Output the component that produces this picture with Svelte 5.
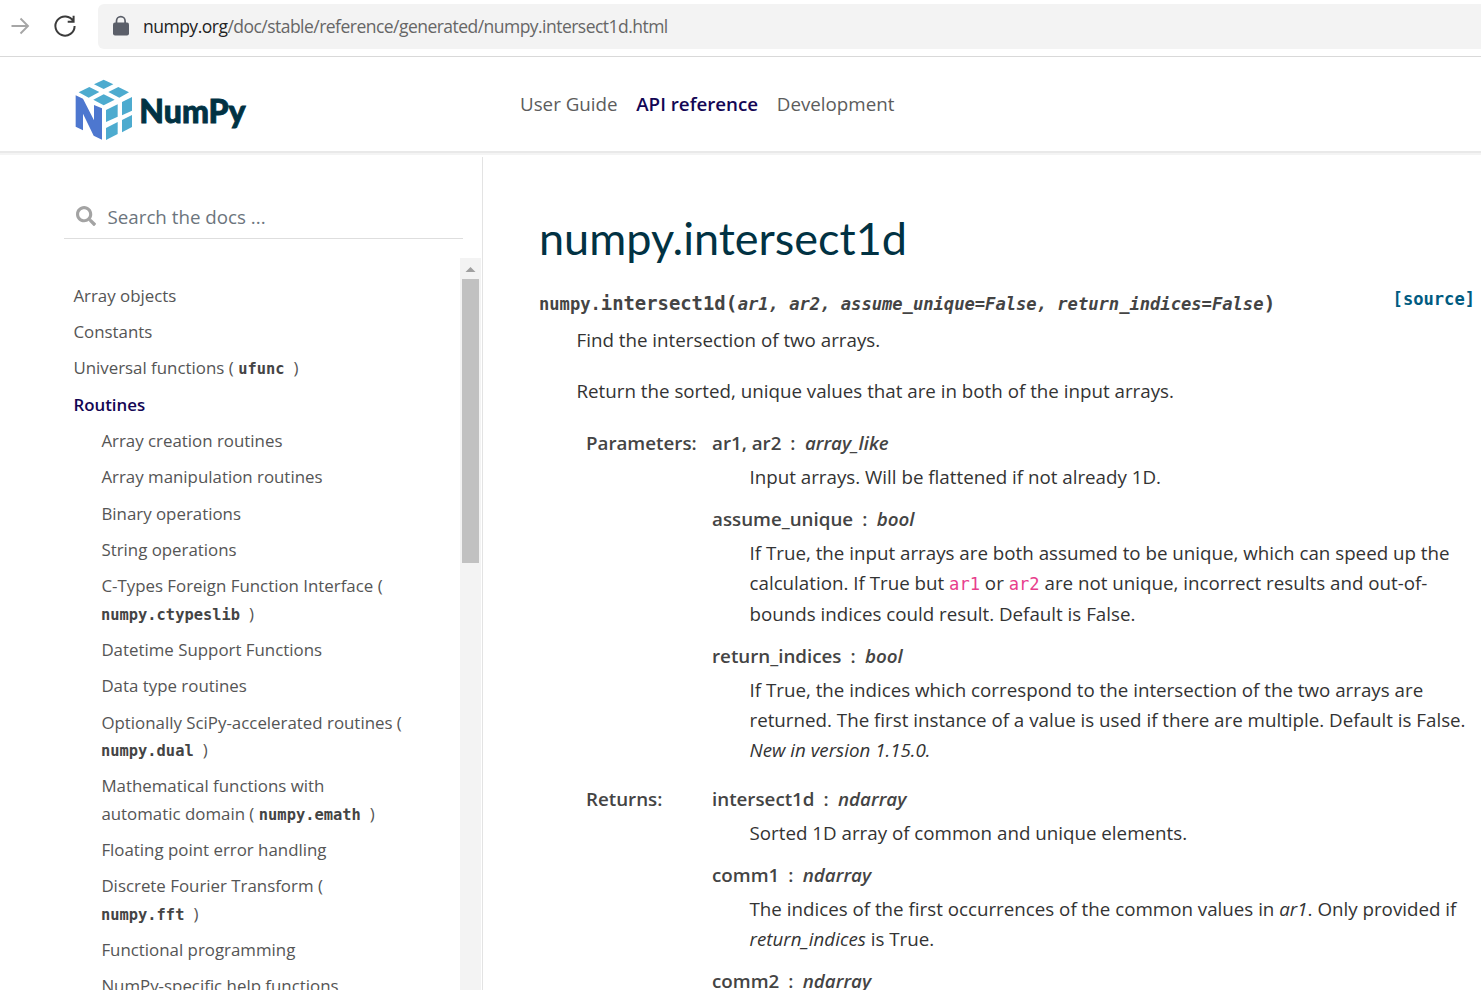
<script>
  const topics = [
    { text: 'Array objects' },
    { text: 'Constants' },
    { text: 'Universal functions (', code: 'ufunc' },
    { text: 'Routines', active: true },
    { text: 'Array creation routines', sub: true },
    { text: 'Array manipulation routines', sub: true },
    { text: 'Binary operations', sub: true },
    { text: 'String operations', sub: true },
    { text: 'C-Types Foreign Function Interface (', code: 'numpy.ctypeslib', wrap: true, sub: true },
    { text: 'Datetime Support Functions', sub: true },
    { text: 'Data type routines', sub: true },
    { text: 'Optionally SciPy-accelerated routines (', code: 'numpy.dual', wrap: true, sub: true },
    { text: 'Mathematical functions with', rest: 'automatic domain (', code: 'numpy.emath', sub: true },
    { text: 'Floating point error handling', sub: true },
    { text: 'Discrete Fourier Transform (', code: 'numpy.fft', wrap: true, sub: true },
    { text: 'Functional programming', sub: true },
    { text: 'NumPy-specific help functions', sub: true }
  ];
</script>

<div class="page">
  <div class="browser">
    <svg class="fwd" width="20" height="20" viewBox="0 0 20 20"><path d="M1.500 10H18M10.500 2.500L18 10L10.500 17.500" fill="none" stroke="#a6a6a6" stroke-width="1.900" /></svg>
    <svg class="reload" width="24" height="24" viewBox="0 0 24 24"><path d="M20.300 7.200A9.600 9.600 0 1 0 21.600 12M20.600 1.800V7.700H14.700" fill="none" stroke="#3b3b3b" stroke-width="2" /></svg>
    <div class="address">
      <svg width="18" height="22" viewBox="0 0 18 22"><path d="M4.500 9V6a4.300 4.300 0 0 1 8.600 0v3" fill="none" stroke="#5b5f69" stroke-width="1.700" /><rect x="1" y="7.500" width="16" height="13" rx="2" fill="#5b5f69" /></svg>
      <span class="url"><b>numpy.org</b>/doc/stable/reference/generated/numpy.intersect1d.html</span>
    </div>
  </div>

  <header>
    <svg class="logo" width="200" height="80" viewBox="0 0 600 240">
      <g fill="#4dabcf">
        <path d="M131 29L160 43L131 57L102 43Z" />
        <path d="M88 51L118 66L86 83L56 67Z" />
        <path d="M175 51L207 67L178 83L145 66Z" />
        <path d="M131 73L164 89L131 106L100 89Z" />
        <path d="M138 120L173 103V140L138 156Z" />
        <path d="M186 96L216 81V122L186 136Z" />
        <path d="M138 174L173 156V192L138 210Z" />
        <path d="M186 150L216 135V171L186 187Z" />
      </g>
      <path d="M47 76L69 86L102 151V105L126 115V209L101 197L69 131V181L47 170Z" fill="#4d77cf" />
      <text x="238" y="160" textLength="319" lengthAdjust="spacingAndGlyphs">NumPy</text>
    </svg>
    <nav>
      <span class="n1">User Guide</span>
      <span class="n2">API reference</span>
      <span class="n3">Development</span>
    </nav>
  </header>

  <div class="body">
    <aside>
      <div class="search">
        <svg width="20" height="20" viewBox="0 0 512 512"><path fill="#a3a3a3" d="M505 442.700L405.300 343c-4.500-4.500-10.600-7-17-7H372c27.600-35.300 44-79.700 44-128C416 93.100 322.900 0 208 0S0 93.100 0 208s93.100 208 208 208c48.300 0 92.700-16.400 128-44v16.300c0 6.400 2.500 12.500 7 17l99.700 99.700c9.400 9.400 24.600 9.400 33.900 0l28.300-28.300c9.400-9.400 9.400-24.600.1-34zM208 336c-70.700 0-128-57.200-128-128 0-70.700 57.200-128 128-128 70.700 0 128 57.200 128 128 0 70.700-57.200 128-128 128z" /></svg>
        <span>Search the docs ...</span>
      </div>
      <div class="scroller">
        <ul>
          {#each topics as t}
            <li class:sub={t.sub} class:active={t.active}>
              {t.text}{#if t.rest}<br />{t.rest}{/if}{#if t.wrap}<br />{/if}{#if t.code}<code class:lead={t.wrap}>{t.code}</code><span>)</span>{/if}
            </li>
          {/each}
        </ul>
        <div class="track">
          <svg width="21" height="21" viewBox="0 0 21 21"><path d="M5.500 14L10.500 9L15.500 14Z" fill="#a0a0a0" /></svg>
          <div class="thumb"></div>
        </div>
      </div>
    </aside>

    <main>
      <h1>numpy.intersect1d</h1>
      <div class="sig">
        <div><span>numpy.</span><span class="big">intersect1d<span class="paren">(</span></span><i>ar1, ar2, assume_unique=False, return_indices=False</i><span class="big paren">)</span></div>
        <a href="#source">[source]</a>
      </div>
      <div class="desc">
        <p>Find the intersection of two arrays.</p>
        <p>Return the sorted, unique values that are in both of the input arrays.</p>
        <div class="fields">
          <div class="label">Parameters:</div>
          <dl>
            <dt>ar1, ar2<span>:</span><i>array_like</i></dt>
            <dd>Input arrays. Will be flattened if not already 1D.</dd>
            <dt>assume_unique<span>:</span><i>bool</i></dt>
            <dd>If True, the input arrays are both assumed to be unique, which can speed up the<br />calculation. If True but <code>ar1</code> or <code>ar2</code> are not unique, incorrect results and out-of-<br />bounds indices could result. Default is False.</dd>
            <dt>return_indices<span>:</span><i>bool</i></dt>
            <dd>If True, the indices which correspond to the intersection of the two arrays are<br />returned. The first instance of a value is used if there are multiple. Default is False.<br /><em>New in version 1.15.0.</em></dd>
          </dl>
          <div class="label">Returns:</div>
          <dl>
            <dt>intersect1d<span>:</span><i>ndarray</i></dt>
            <dd>Sorted 1D array of common and unique elements.</dd>
            <dt>comm1<span>:</span><i>ndarray</i></dt>
            <dd>The indices of the first occurrences of the common values in <em>ar1</em>. Only provided if<br /><em>return_indices</em> is True.</dd>
            <dt>comm2<span>:</span><i>ndarray</i></dt>
          </dl>
        </div>
      </div>
    </main>
  </div>
</div>

<style>
  :global(body) { margin: 0; background: #fff; }
  .page { width: 1481px; height: 990px; overflow: hidden; display: flex; flex-direction: column; background: #fff; color: #333; font: 18.75px/30.2px "Open Sans", sans-serif; white-space: nowrap; }
  .browser { height: 56px; flex: none; display: flex; border-bottom: 1px solid #d9d9d9; box-sizing: content-box; }
  .fwd { margin: 16px 0 0 10px; }
  .reload { margin: 14px 0 0 23px; }
  .address { margin: 4px 0 0 21px; flex: 1; height: 45px; background: #f3f3f3; border-radius: 6px 0 0 6px; display: flex; align-items: center; }
  .address svg { margin: -1px 13px 0 14px; }
  .url { font-size: 17.5px; color: #666; letter-spacing: -0.53px; }
  .url b { font-weight: 400; color: #222; letter-spacing: -0.5px; }
  header { height: 94px; flex: none; display: flex; border-bottom: 2px solid #e9e9e9; box-shadow: 0 2px 0 #f4f4f4; }
  .logo { margin: 13px 0 0 60px; flex: none; }
  .logo text { font: 900 95px Lato, sans-serif; fill: #013243; stroke: #013243; stroke-width: 2.500px; }
  nav { display: flex; gap: 18.700px; margin: 32px 0 0 260px; color: #5c5c5c; }
  .n2 { color: #130654; font-weight: 600; }
  .body { flex: 1; min-height: 0; display: flex; margin-top: 4px; }
  aside { width: 482px; flex: none; border-right: 1px solid #e3e3e3; display: flex; flex-direction: column; }
  .search { margin: 38px 19px 0 64px; width: 387px; height: 43px; padding-left: 12px; border-bottom: 1px solid #dedede; display: flex; align-items: center; gap: 11.500px; color: #6c757d; }
  .search svg { margin-top: -2px; }
  .search span { margin-top: 2px; }
  .scroller { display: flex; flex: 1; min-height: 0; margin-top: 19px; overflow: hidden; }
  ul { list-style: none; margin: 19.100px 0 0; padding: 0 0 0 73.400px; width: 386.600px; flex: none; font-size: 16.875px; line-height: 27.330px; color: #555; }
  li { padding: 4.500px 0; }
  .sub { margin-left: 28px; }
  .active { color: #130654; font-weight: 600; }
  li code { font: bold 15.4px/1 "DejaVu Sans Mono", monospace; color: #444; margin: 0 9px 0 4.500px; }
  li code.lead { margin-left: -0.400px; }
  .track { width: 21px; background: #f3f3f3; }
  .track svg { display: block; }
  .thumb { width: 17px; height: 284px; margin-left: 2px; background: #c1c1c1; }
  main { flex: 1; min-width: 0; padding: 46px 0 0 56px; }
  h1 { margin: 0; font: 400 45.020px/70px Lato, sans-serif; color: #013243; }
  .sig { display: flex; justify-content: space-between; height: 30px; margin-top: 16px; padding-right: 6px; font: bold 17.130px/30px "DejaVu Sans Mono", monospace; color: #444; }
  .sig i { font-size: 17.140px; }
  .big { font-size: 18.850px; }
  .paren { font-size: 20px; line-height: 1; }
  .sig a { color: #005b81; text-decoration: none; margin-top: -5px; }
  .desc { margin-left: 37.500px; }
  p { margin: 6px 0 20.800px; }
  p + p { margin: 0; }
  .fields { display: grid; grid-template-columns: 126px 1fr; margin: 22px 0 0 9.500px; }
  .label, dt { font-weight: 600; color: #444; }
  dl { margin: 0 0 6.600px; }
  dt span { margin: 0 9.400px 0 9px; }
  dd { margin: 3.900px 0 11.700px 37.500px; }
  dd code { font: 17.130px/1 "DejaVu Sans Mono", monospace; color: #e83e8c; }
</style>
